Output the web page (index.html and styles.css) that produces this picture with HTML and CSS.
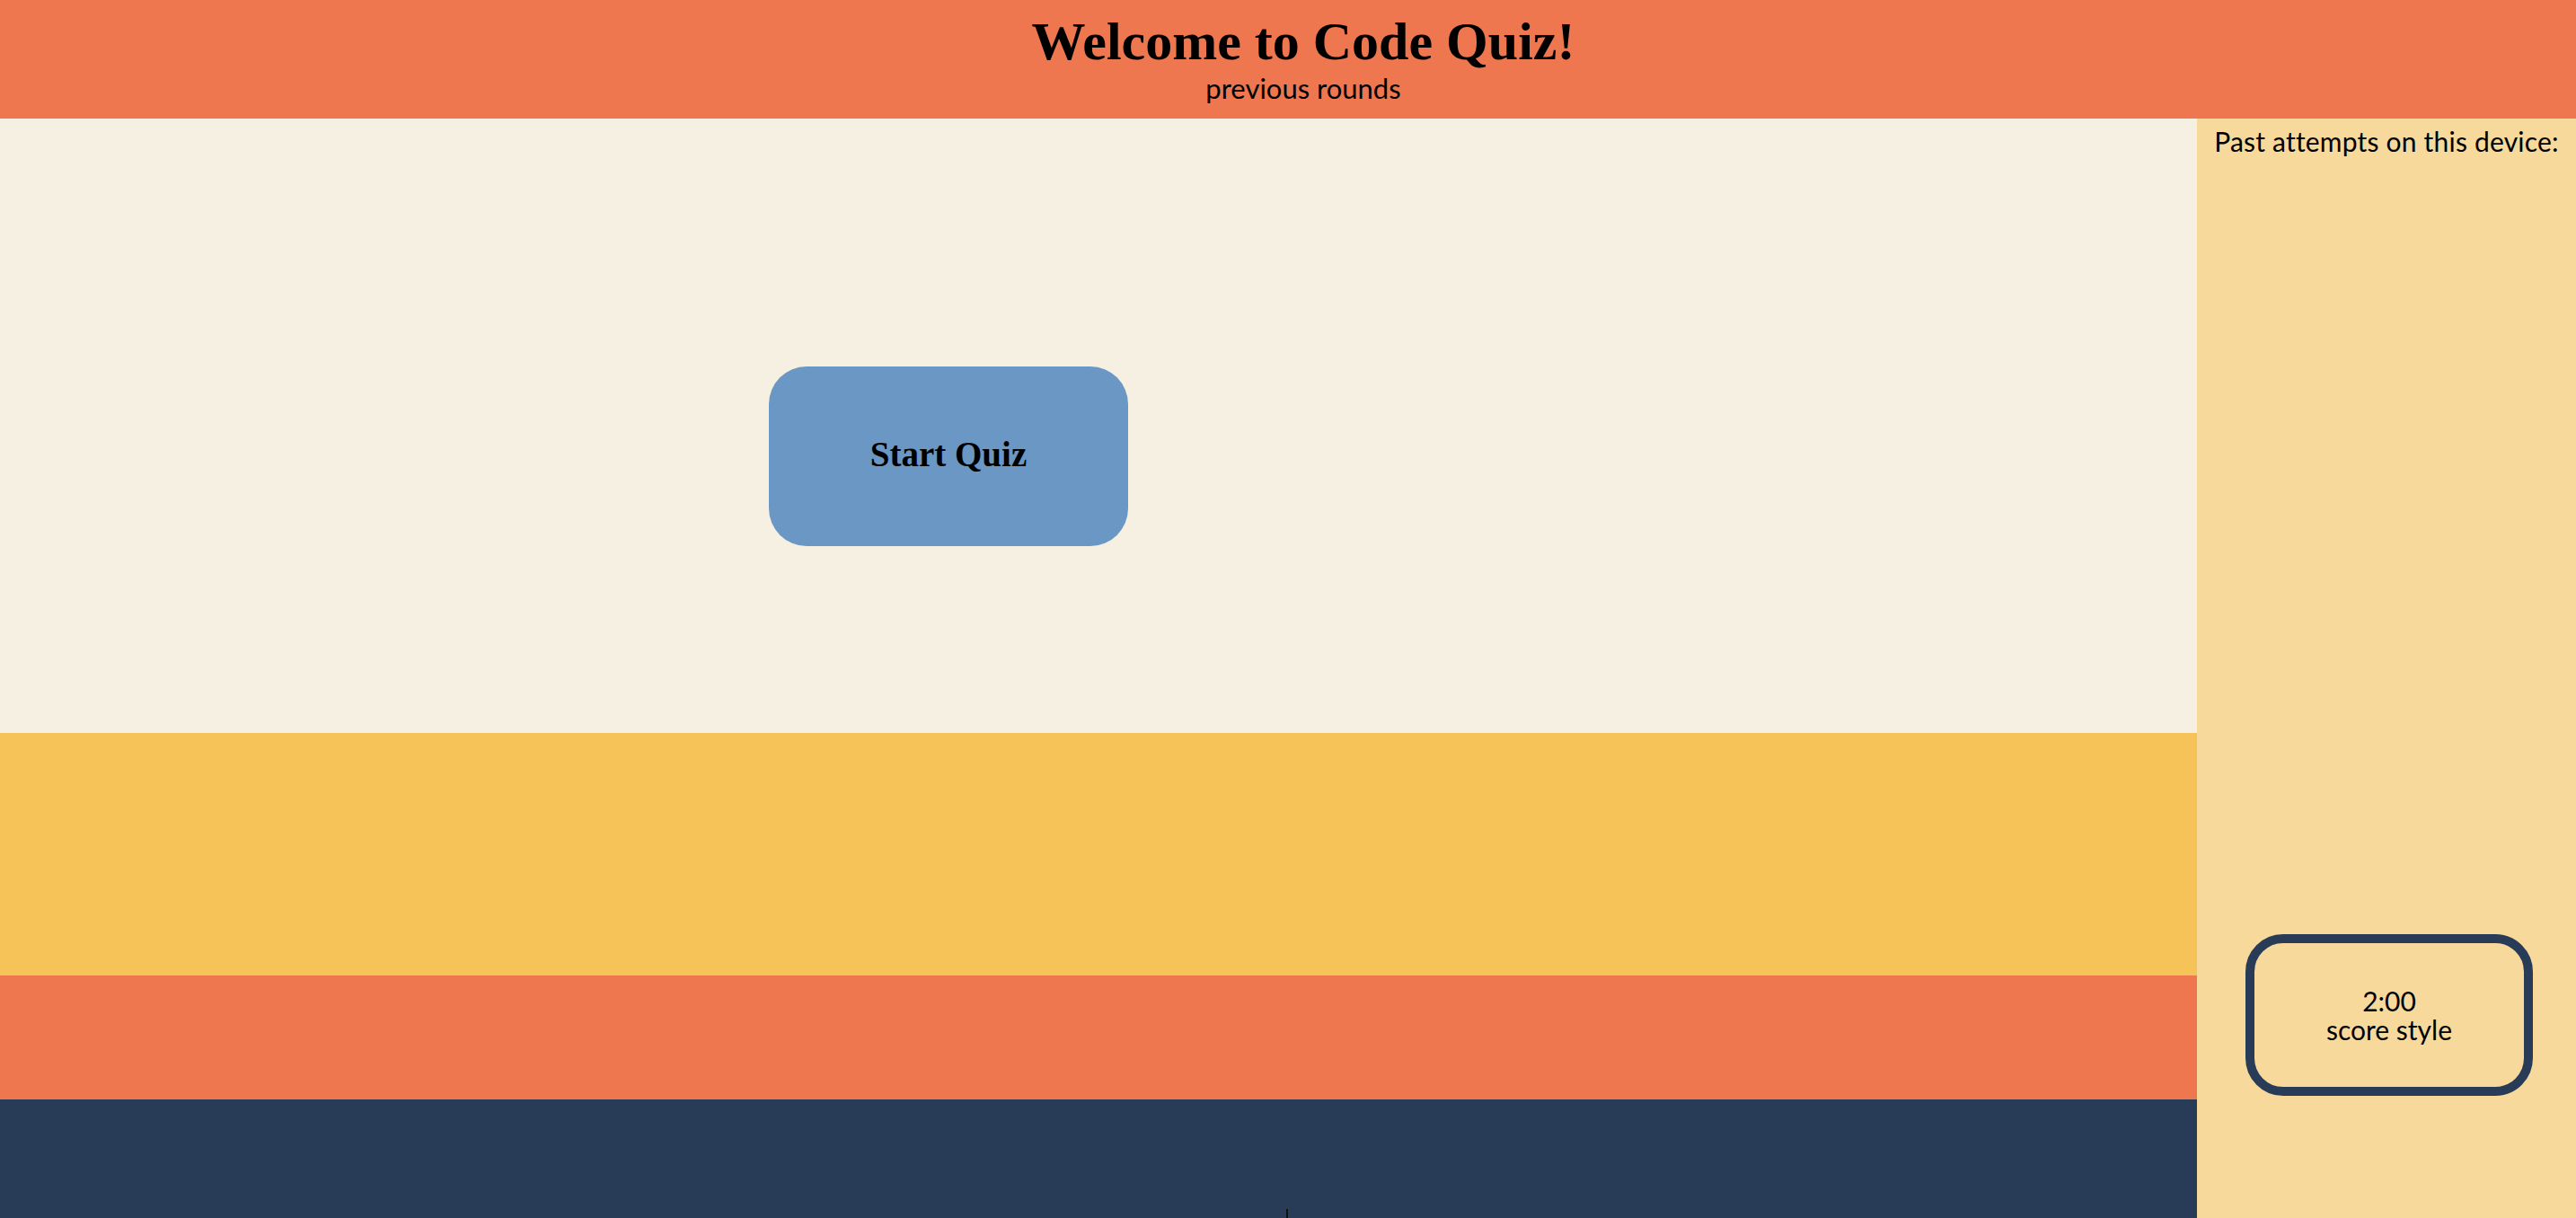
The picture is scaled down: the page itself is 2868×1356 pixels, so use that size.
FILE: index.html
```html
<!DOCTYPE html>
<html>
<head>
<meta charset="utf-8">
<link rel="stylesheet" href="styles.css">
<title>Code Quiz</title>
</head>
<body>
<header class="top">
  <h1 class="title">Welcome to Code Quiz!</h1>
  <div class="subtitle">previous rounds</div>
</header>
<div class="layout">
  <main class="main">
    <section class="stage">
      <button class="start">Start Quiz</button>
    </section>
    <section class="band-yellow"></section>
    <section class="band-orange"></section>
    <footer class="band-navy"><span class="caret"></span></footer>
  </main>
  <aside class="side">
    <div class="side-title">Past attempts on this device:</div>
    <div class="timer">
      <div>2:00</div>
      <div>score style</div>
    </div>
  </aside>
</div>
</body>
</html>
```
FILE: styles.css
```css
* { box-sizing: border-box; }
html, body { margin: 0; padding: 0; }
body {
  width: 2868px;
  height: 1356px;
  overflow: hidden;
  font-family: "Lato", "Noto Sans", sans-serif;
  color: #000;
  display: flex;
  flex-direction: column;
}
.top {
  height: 132px;
  background: #ee774f;
  display: flex;
  flex-direction: column;
  align-items: center;
  padding-top: 13px;
  padding-left: 34px;
}
.title {
  margin: 0;
  font-family: "Liberation Serif", serif;
  font-weight: bold;
  font-size: 60px;
  line-height: 66px;
}
.subtitle {
  font-size: 31px;
  line-height: 38px;
}
.layout {
  flex: 1;
  display: flex;
}
.main {
  width: 2446px;
  display: flex;
  flex-direction: column;
}
.stage {
  height: 684px;
  background: #f5f0e1;
  padding-top: 276px;
  padding-left: 856px;
}
.start {
  width: 400px;
  height: 200px;
  border: none;
  border-radius: 42px;
  background: #6a97c4;
  font-family: "Liberation Serif", serif;
  font-weight: bold;
  font-size: 39px;
  color: #000;
  padding: 0 0 6px 0;
}
.band-yellow {
  height: 270px;
  background: #f6c358;
}
.band-orange {
  height: 138px;
  background: #ee774f;
}
.band-navy {
  flex: 1;
  background: #283c57;
  position: relative;
}
.caret {
  position: absolute;
  left: 1432px;
  bottom: 0;
  width: 2px;
  height: 10px;
  background: #111;
}
.side {
  flex: 1;
  background: #f7d99c;
  display: flex;
  flex-direction: column;
  align-items: center;
  padding-top: 5px;
  padding-bottom: 136px;
}
.side-title {
  font-size: 30px;
  line-height: 40px;
  text-align: center;
  letter-spacing: 0.2px;
}
.timer {
  margin-top: auto;
  width: 320px;
  height: 180px;
  border: 10px solid #283c57;
  border-radius: 42px;
  display: flex;
  flex-direction: column;
  align-items: center;
  justify-content: center;
  font-size: 30px;
  line-height: 32px;
  margin-left: 6px;
}
```
